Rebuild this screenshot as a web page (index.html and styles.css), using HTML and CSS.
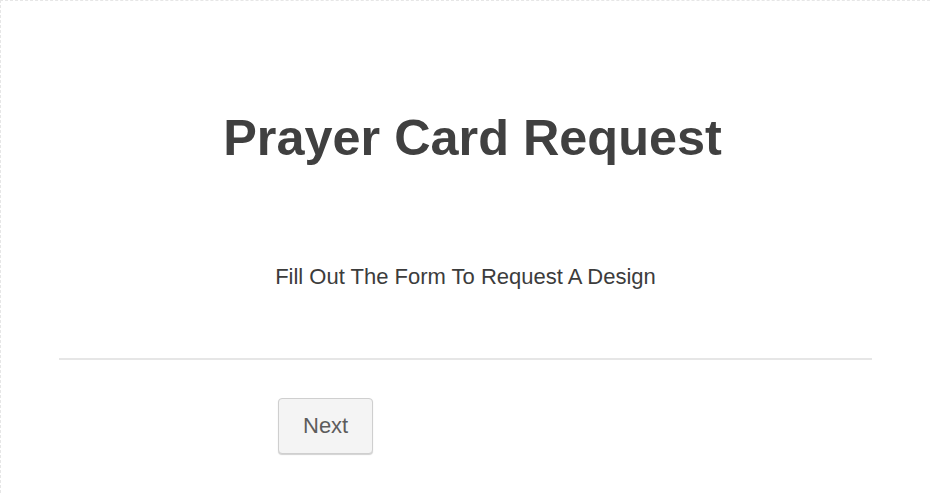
FILE: index.html
```html
<!DOCTYPE html>
<html>
<head>
<meta charset="utf-8">
<link rel="stylesheet" href="styles.css">
</head>
<body>
<div class="page">
  <div class="header">
    <h1 class="title">Prayer Card Request</h1>
    <p class="subtitle">Fill Out The Form To Request A Design</p>
  </div>
  <hr class="divider">
  <div class="actions">
    <button class="next-btn" type="button">Next</button>
  </div>
</div>
</body>
</html>
```
FILE: styles.css
```css
html, body {
  margin: 0;
  padding: 0;
  background: #fff;
}
body {
  font-family: "Liberation Sans", Arial, sans-serif;
}
.page {
  width: 930px;
  height: 493px;
  box-sizing: border-box;
  border-top: 1px dashed #e6e6e6;
  border-left: 1px dashed #e6e6e6;
  overflow: hidden;
}
.header {
  padding-top: 107px;
  text-align: center;
}
.title {
  margin: 0;
  padding-left: 14px;
  font-size: 50.4px;
  line-height: 60px;
  font-weight: bold;
  color: #404040;
}
.subtitle {
  margin: 96px 0 0 0;
  font-size: 22px;
  line-height: 26px;
  color: #3c3c3c;
}
.divider {
  margin: 68px 0 0 58px;
  width: 813px;
  height: 2px;
  border: 0;
  background: #e6e6e6;
}
.actions {
  padding: 38px 0 0 277px;
}
.next-btn {
  font-family: "Liberation Sans", Arial, sans-serif;
  font-size: 22px;
  line-height: 26px;
  color: #5c5c5c;
  background: #f4f4f4;
  border: 1px solid #cfcfcf;
  border-radius: 4px;
  padding: 14px 24px;
  box-shadow: 0 1px 1px rgba(0,0,0,0.18);
  cursor: pointer;
}
```
